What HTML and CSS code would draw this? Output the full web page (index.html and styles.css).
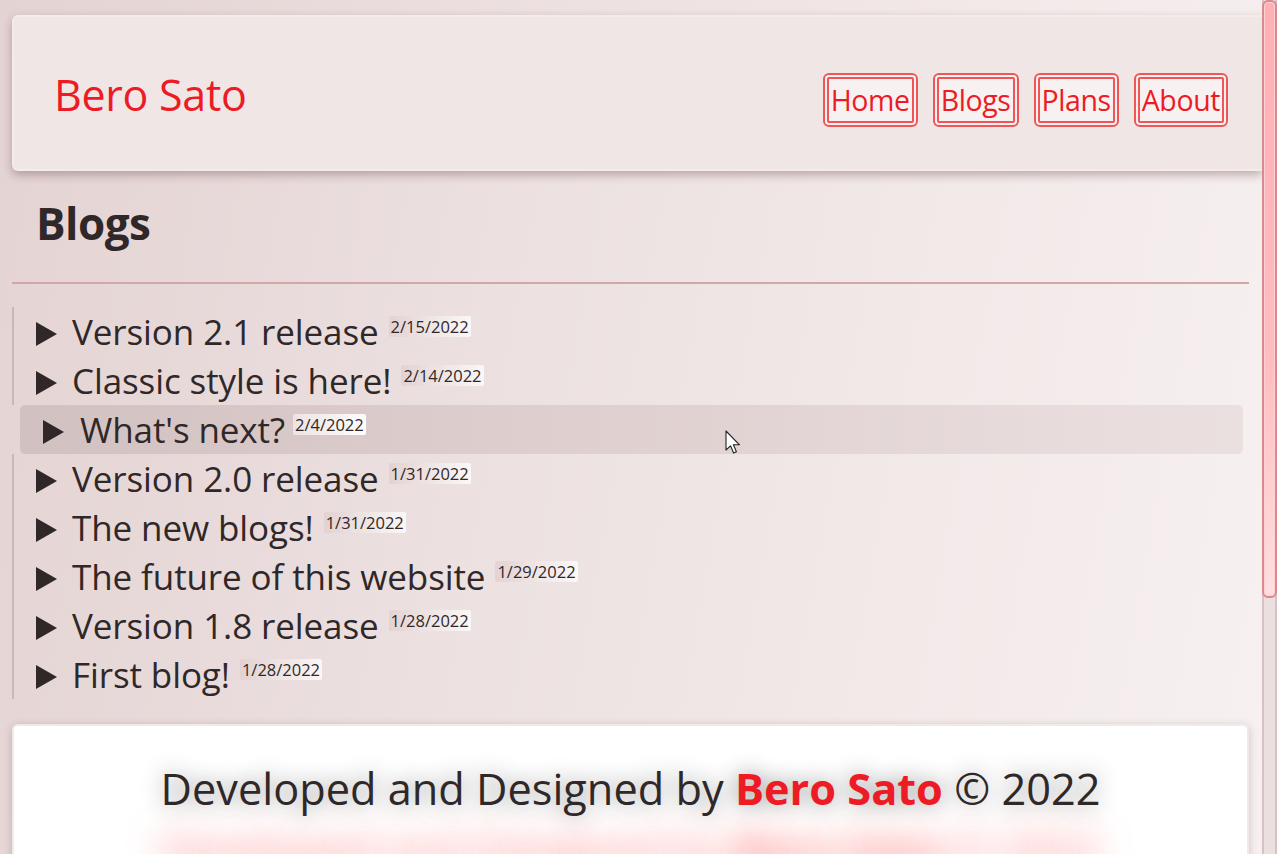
FILE: index.html
```html
<!DOCTYPE html>
<html lang="en">
<head>
<meta charset="utf-8">
<title>Blogs - Bero Sato</title>
<link rel="stylesheet" href="styles.css">
</head>
<body>
<header class="site-header">
  <a class="brand" href="#">Bero Sato</a>
  <nav class="nav">
    <a class="nav-btn" href="#">Home</a>
    <a class="nav-btn" href="#">Blogs</a>
    <a class="nav-btn" href="#">Plans</a>
    <a class="nav-btn" href="#">About</a>
  </nav>
</header>
<main class="content">
  <h2 class="page-title">Blogs</h2>
  <hr class="rule">
  <ul class="blog-list">
    <li class="blog-item"><span class="arrow"></span><span class="blog-title">Version 2.1 release</span><sup class="date">2/15/2022</sup></li>
    <li class="blog-item"><span class="arrow"></span><span class="blog-title">Classic style is here!</span><sup class="date">2/14/2022</sup></li>
    <li class="blog-item hovered"><span class="arrow"></span><span class="blog-title">What's next?</span><sup class="date">2/4/2022</sup></li>
    <li class="blog-item"><span class="arrow"></span><span class="blog-title">Version 2.0 release</span><sup class="date">1/31/2022</sup></li>
    <li class="blog-item"><span class="arrow"></span><span class="blog-title">The new blogs!</span><sup class="date">1/31/2022</sup></li>
    <li class="blog-item"><span class="arrow"></span><span class="blog-title">The future of this website</span><sup class="date">1/29/2022</sup></li>
    <li class="blog-item"><span class="arrow"></span><span class="blog-title">Version 1.8 release</span><sup class="date">1/28/2022</sup></li>
    <li class="blog-item"><span class="arrow"></span><span class="blog-title">First blog!</span><sup class="date">1/28/2022</sup></li>
  </ul>
  <footer class="site-footer">
    <p class="credit">Developed and Designed by <strong class="credit-name">Bero Sato</strong> © 2022</p>
  </footer>
</main>
<div class="scrollbar" aria-hidden="true"><div class="scroll-thumb"></div></div>
<svg class="cursor" width="16" height="26" viewBox="0 0 16 26" aria-hidden="true">
  <path d="M1 1 L1 20 L5.5 15.8 L8.6 23 L11.4 21.8 L8.4 14.8 L14.5 14.8 Z" fill="#fff" stroke="#222" stroke-width="1.1" stroke-linejoin="round"/>
</svg>
</body>
</html>
```

FILE: styles.css
```css
html {
  background: linear-gradient(100deg, #e4d3d3 0%, #eee3e3 45%, #f8f2f2 100%);
  min-height: 100%;
}
body {
  margin: 0;
  padding-right: 15px;
  font-family: "Open Sans", "Noto Sans", sans-serif;
  color: #302828;
  position: relative;
  min-height: 1220px;
}
a {
  text-decoration: none;
}
.scrollbar {
  position: fixed;
  top: 0;
  right: 0;
  width: 15px;
  height: 100vh;
  box-sizing: border-box;
  background: #ecdfe0;
  border-left: 2px solid #d7c1c3;
  border-right: 2px solid #d7c1c3;
}
.scroll-thumb {
  position: absolute;
  top: 0;
  left: -2px;
  width: 15px;
  height: 598px;
  box-sizing: border-box;
  background: linear-gradient(180deg, #ffb0b5 0%, #ffbdc0 60%, #ffdfe0 100%);
  border: 2px solid #d98a8e;
  border-radius: 6px;
  box-shadow: inset 0 0 0 1px #ffd0d2;
}
.site-header {
  margin: 15px 0 0 12px;
  height: 156px;
  box-sizing: border-box;
  padding: 0 34px 0 40px;
  display: flex;
  align-items: center;
  justify-content: space-between;
  background: #f0e6e6;
  border: 2px solid #f3ecec;
  border-right: none;
  border-radius: 6px 0 0 6px;
  box-shadow: 0 4px 10px rgba(90, 50, 50, 0.35);
}
.brand {
  color: #ed1c24;
  font-size: 43px;
  letter-spacing: -0.3px;
  line-height: 1;
  padding-top: 3px;
}
.nav {
  display: flex;
  gap: 15px;
  padding-top: 14px;
}
.nav-btn {
  display: block;
  color: #ed1c24;
  font-size: 28.5px;
  line-height: 42px;
  padding: 0 2px;
  background: #f7f1f1;
  border: 6px double #f05558;
  border-radius: 6px;
  letter-spacing: -0.4px;
}
.content {
  margin: 0 13px 0 12px;
}
.page-title {
  margin: 21px 0 0;
  padding-left: 24px;
  font-size: 44px;
  font-weight: 700;
  line-height: 62px;
  letter-spacing: -0.5px;
}
.rule {
  margin: 28px 0 0;
  border: none;
  height: 2px;
  background: #d4a7a7;
}
.blog-list {
  list-style: none;
  margin: 23px 0 0;
  padding: 0;
}
.blog-item {
  display: flex;
  align-items: baseline;
  height: 49px;
  line-height: 49px;
  font-size: 35px;
  border-left: 2px solid #cbb7b8;
  padding-left: 22px;
  letter-spacing: -0.1px;
}
.blog-item.hovered {
  border-left: none;
  margin: 0 6px 0 8px;
  padding-left: 23px;
  border-radius: 5px;
  background: linear-gradient(90deg, #d2c1c1 0%, #dfcfcf 45%, #ebe0e0 100%);
}
.arrow {
  display: inline-block;
  width: 0;
  height: 0;
  border-left: 21px solid #302828;
  border-top: 12px solid transparent;
  border-bottom: 12px solid transparent;
  margin-right: 15px;
  align-self: center;
  transform: translateY(2px);
}
.blog-item.hovered .arrow {
  margin-right: 16px;
}
.date {
  font-size: 16.5px;
  line-height: 21px;
  align-self: flex-start;
  margin: 9px 0 0 10px;
  padding: 0 2px;
  border-radius: 2px;
  letter-spacing: 0;
  background: linear-gradient(90deg, rgba(225, 205, 205, 0.7), rgba(255, 255, 255, 0.75));
}
.blog-item.hovered .date {
  margin-left: 8px;
  background: linear-gradient(90deg, rgba(240, 230, 230, 0.9), rgba(255, 255, 255, 0.95));
}
.site-footer {
  margin: 25px 0 20px;
  min-height: 470px;
  background: #ffffff;
  border: 2px solid #f2eaea;
  border-radius: 6px;
  box-shadow: 0 2px 8px rgba(90, 50, 50, 0.25);
  text-align: center;
  overflow: hidden;
}
.credit {
  margin: 34px 0 0;
  font-size: 43.3px;
  line-height: 58px;
  text-shadow: 0 0 22px rgba(0, 0, 0, 0.45), 0 62px 34px rgba(255, 70, 70, 0.75);
}
.credit-name {
  color: #ed1c24;
  font-weight: 700;
}
.cursor {
  position: absolute;
  left: 725px;
  top: 430px;
}
```
